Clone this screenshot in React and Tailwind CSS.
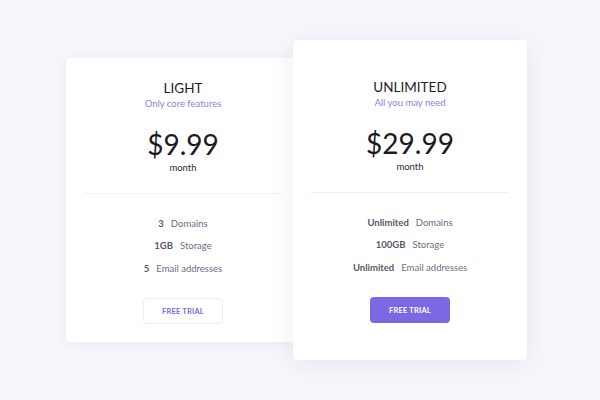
const plans = [
  {
    name: "LIGHT",
    tagline: "Only core features",
    price: "$9.99",
    features: [
      ["3", "Domains"],
      ["1GB", "Storage"],
      ["5", "Email addresses"],
    ],
    featured: false,
  },
  {
    name: "UNLIMITED",
    tagline: "All you may need",
    price: "$29.99",
    features: [
      ["Unlimited", "Domains"],
      ["100GB", "Storage"],
      ["Unlimited", "Email addresses"],
    ],
    featured: true,
  },
];

function PlanCard({ plan }) {
  const featured = plan.featured;
  return (
    <div
      className={
        featured
          ? "relative z-10 -ml-[7px] w-[234px] rounded-[4px] bg-white px-[18px] pt-[38px] pb-[37px] shadow-[0_4px_24px_rgba(40,40,90,0.08)]"
          : "w-[234px] rounded-[4px] bg-white px-[18px] pt-[21px] pb-[18px] shadow-[0_2px_16px_rgba(40,40,90,0.05)]"
      }
    >
      <div className="flex flex-col items-center">
        <h3 className="text-[13.5px] leading-[18px] text-[#1c1c28]">{plan.name}</h3>
        <p className="text-[9.5px] leading-[13px] text-[#8f80e8]">{plan.tagline}</p>
        <p className="mt-[17px] text-[28px] font-normal leading-[34px] text-[#1a1a24]">{plan.price}</p>
        <p className="text-[9.5px] leading-[13px] text-[#2a2a36]">month</p>
      </div>

      <div className="mt-[19px] border-t border-[#f0f1f5]" />

      <ul className="mt-[23px] flex flex-col items-center gap-[8px] text-[9.5px] leading-[14.5px]">
        {plan.features.map(([value, label], i) => (
          <li key={i} className="flex gap-[7px]">
            <span className="font-bold text-[#555868]">{value}</span>
            <span className="text-[#6b6e80]">{label}</span>
          </li>
        ))}
      </ul>

      <div className="mt-[22px] flex justify-center">
        {featured ? (
          <button className="h-[26px] w-[80px] rounded-[4px] bg-[#7b69e3] text-[7.5px] font-bold tracking-[0.2px] text-white">
            FREE TRIAL
          </button>
        ) : (
          <button className="h-[26px] w-[80px] rounded-[4px] border border-[#eceef3] bg-white text-[7.5px] font-bold tracking-[0.2px] text-[#7b69e3]">
            FREE TRIAL
          </button>
        )}
      </div>
    </div>
  );
}

export default function App() {
  return (
    <div
      className="flex h-[400px] w-[600px] items-center bg-[#f6f7fb] pl-[66px]"
      style={{ fontFamily: "Lato, 'Open Sans', sans-serif" }}
    >
      {plans.map((plan) => (
        <PlanCard key={plan.name} plan={plan} />
      ))}
    </div>
  );
}
